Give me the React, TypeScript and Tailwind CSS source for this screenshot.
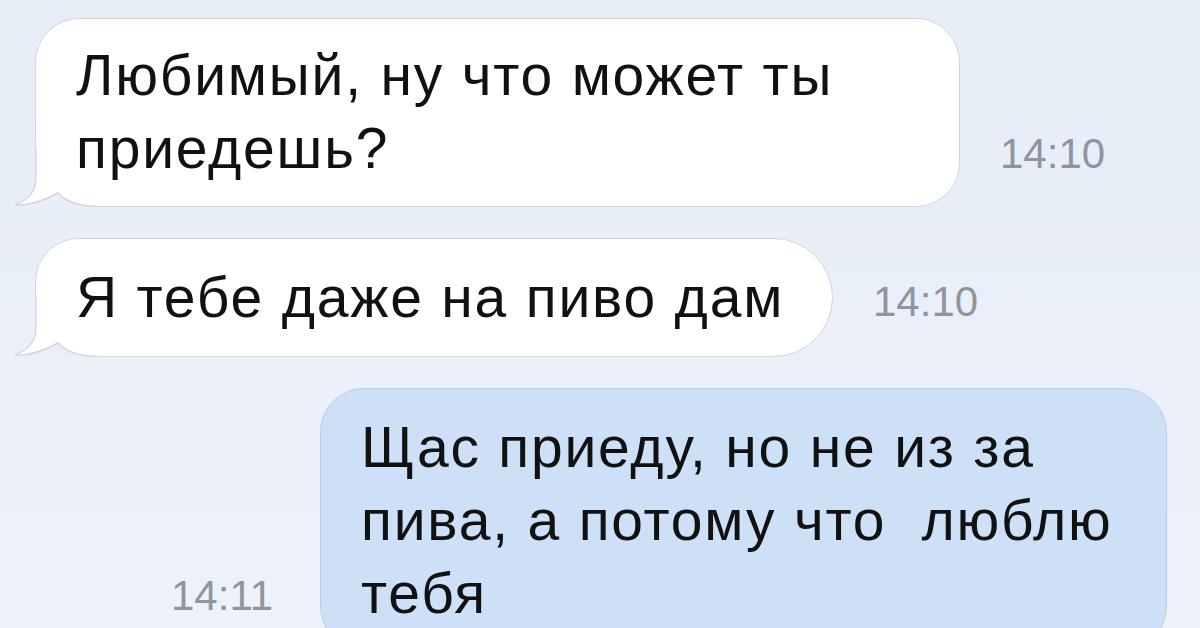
import React from "react";

const textFont = {
  fontFamily: '"Liberation Sans", Arial, sans-serif',
};

function Time({ children, className }: { children: React.ReactNode; className?: string }) {
  return (
    <span
      className={`shrink-0 text-[42px] leading-none text-[#8f959e] ${className ?? ""}`}
      style={textFont}
    >
      {children}
    </span>
  );
}

// little speech tail at the lower left corner of incoming bubbles
function Tail() {
  const edge = "M22.75 0 L22.75 32 C22.75 46 14 53 2 58 C16 59 32 53 45 46 Q57 59.25 84 59.25";
  return (
    <svg className="absolute -left-[22px] bottom-0" width="90" height="60" viewBox="0 0 90 60">
      <path d="M2 58 C16 59 32 53 45 46 Q57 59.25 84 59.25 L84 60 L0 60 Z" fill="#e9eff8" />
      <path d={`${edge} L84 0 Z`} fill="#ffffff" />
      <path d={edge} fill="none" stroke="#d2d6dc" strokeWidth="1.5" />
    </svg>
  );
}

function Incoming({ children, className }: { children: React.ReactNode; className: string }) {
  return (
    <div className={`relative shrink-0 ${className}`}>
      <div className="h-full w-full rounded-[44px] rounded-bl-none border-[1.5px] border-[#d2d6dc] bg-white" />
      <Tail />
      <div className="absolute inset-0">{children}</div>
    </div>
  );
}

export default function App() {
  return (
    <div className="h-[628px] w-[1200px] overflow-hidden bg-gradient-to-b from-[#e6edf7] to-[#eef2fa]">
      <div className="flex flex-col gap-[31px] pt-[18px]">
        <div className="flex items-end gap-[40px] pl-[35px]">
          <Incoming className="h-[189px] w-[925px]">
            <p
              className="pl-[41px] pt-[21px] text-[57px] leading-[73px] tracking-[1.8px] text-[#111111]"
              style={textFont}
            >
              Любимый, ну что может ты
              <br />
              приедешь?
            </p>
          </Incoming>
          <Time className="mb-[32px]">14:10</Time>
        </div>

        <div className="flex items-center gap-[40px] pl-[35px]">
          <Incoming className="h-[119px] w-[798px] [&>div:first-child]:rounded-r-[60px]">
            <div className="flex h-full items-center pl-[41px]">
              <p
                className="text-[57px] leading-[73px] tracking-[1.8px] text-[#111111]"
                style={textFont}
              >
                Я тебе даже на пиво дам
              </p>
            </div>
          </Incoming>
          <Time className="mt-[9px]">14:10</Time>
        </div>

        <div className="flex items-end justify-end gap-[47px] pr-[33px]">
          <Time className="mb-[33px]">14:11</Time>
          <div className="h-[262px] w-[847px] shrink-0 rounded-[44px] border-[1.5px] border-[#bccde4] bg-[#cde0f8] pl-[40px] pt-[22px]">
            <p
              className="whitespace-pre text-[57px] leading-[73px] tracking-[1.8px] text-[#111111]"
              style={textFont}
            >
              {"Щас приеду, но не из за\nпива, а потому что  люблю\nтебя"}
            </p>
          </div>
        </div>
      </div>
    </div>
  );
}
